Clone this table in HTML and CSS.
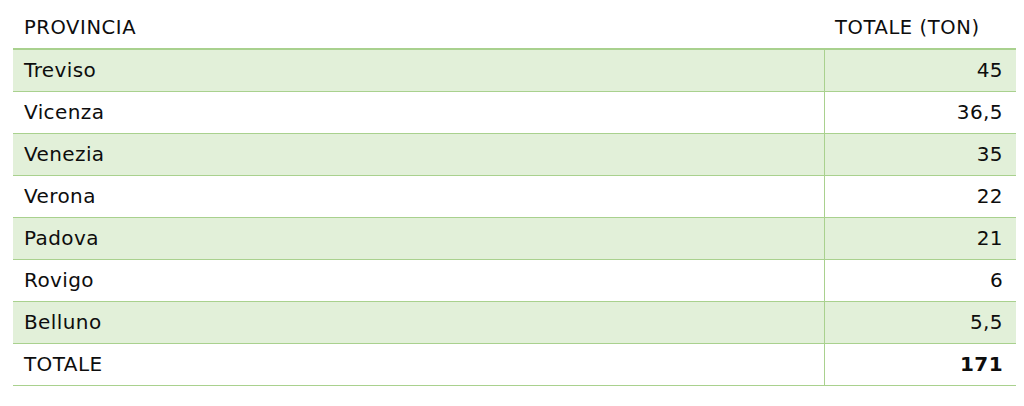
FILE: index.html
```html
<!DOCTYPE html>
<html lang="it">
<head>
<meta charset="utf-8">
<title>Provincia</title>
<link rel="stylesheet" href="styles.css">
</head>
<body>
<table class="data">
  <thead>
    <tr><th class="name">PROVINCIA</th><th class="num">TOTALE (TON)</th></tr>
  </thead>
  <tbody>
    <tr class="alt"><td class="name">Treviso</td><td class="num">45</td></tr>
    <tr><td class="name">Vicenza</td><td class="num">36,5</td></tr>
    <tr class="alt"><td class="name">Venezia</td><td class="num">35</td></tr>
    <tr><td class="name">Verona</td><td class="num">22</td></tr>
    <tr class="alt"><td class="name">Padova</td><td class="num">21</td></tr>
    <tr><td class="name">Rovigo</td><td class="num">6</td></tr>
    <tr class="alt"><td class="name">Belluno</td><td class="num">5,5</td></tr>
    <tr><td class="name">TOTALE</td><td class="num total">171</td></tr>
  </tbody>
</table>
</body>
</html>
```
FILE: styles.css
```css
html, body {
  margin: 0;
  padding: 0;
  background: #ffffff;
}
body {
  padding: 0 8px 0 13px;
  font-family: "DejaVu Sans", "Noto Sans", sans-serif;
  font-size: 20px;
  letter-spacing: 0.4px;
  color: #0d0d0d;
}
.data {
  width: 1003px;
  border-collapse: collapse;
}
.data th {
  font-weight: normal;
  font-size: 19.5px;
  letter-spacing: 0.6px;
  height: 49px;
  padding: 6px 11px 0;
  text-align: left;
  vertical-align: middle;
  border-bottom: 2px solid #a9d18e;
  box-sizing: border-box;
}
.data th.num {
  padding-left: 11px;
  width: 192px;
}
.data td {
  height: 42px;
  padding: 0 11px;
  border-bottom: 1px solid #a9d18e;
  vertical-align: middle;
  box-sizing: border-box;
}
.data td.num {
  text-align: right;
  border-left: 1px solid #a9d18e;
  padding-right: 13px;
}
.data tr.alt td {
  background: #e2f0d9;
}
.data td.total {
  font-weight: bold;
}
```
